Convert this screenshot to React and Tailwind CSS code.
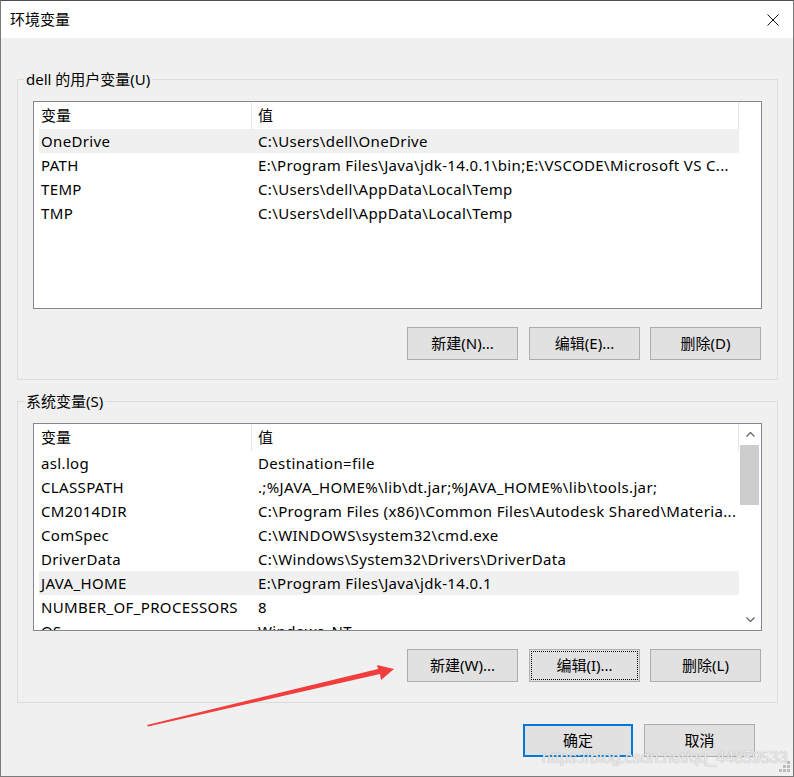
import React from 'react';

const USER_VARS = [
  ['OneDrive', 'C:\\Users\\dell\\OneDrive'],
  ['PATH', 'E:\\Program Files\\Java\\jdk-14.0.1\\bin;E:\\VSCODE\\Microsoft VS C...'],
  ['TEMP', 'C:\\Users\\dell\\AppData\\Local\\Temp'],
  ['TMP', 'C:\\Users\\dell\\AppData\\Local\\Temp'],
];

const SYSTEM_VARS = [
  ['asl.log', 'Destination=file'],
  ['CLASSPATH', '.;%JAVA_HOME%\\lib\\dt.jar;%JAVA_HOME%\\lib\\tools.jar;'],
  ['CM2014DIR', 'C:\\Program Files (x86)\\Common Files\\Autodesk Shared\\Materia...'],
  ['ComSpec', 'C:\\WINDOWS\\system32\\cmd.exe'],
  ['DriverData', 'C:\\Windows\\System32\\Drivers\\DriverData'],
  ['JAVA_HOME', 'E:\\Program Files\\Java\\jdk-14.0.1'],
  ['NUMBER_OF_PROCESSORS', '8'],
  ['OS', 'Windows_NT'],
];

const Chevron = ({ down }) => (
  <svg width="9" height="5" viewBox="0 0 9 5" fill="none">
    <path
      d={down ? 'M0.5 0.5 L4.5 4.5 L8.5 0.5' : 'M0.5 4.5 L4.5 0.5 L8.5 4.5'}
      stroke="#606060"
      strokeWidth="1.2"
    />
  </svg>
);

function VarList({ rows, selected, scroll }) {
  return (
    <div className="mt-[12px] h-[208px] border border-[#828790] bg-white flex overflow-hidden">
      <div className="w-[705px] shrink-0 pl-[5px] flex flex-col">
        {/* Header */}
        <div className="h-[27px] shrink-0 flex">
          <div className="w-[213px] pl-[2px] border-r border-[#e5e5e5] flex items-center">变量</div>
          <div className="w-[487px] pl-[6px] border-r border-[#e5e5e5] flex items-center">值</div>
        </div>
        {rows.map(([name, value]) => (
          <div
            key={name}
            className={`h-[24px] shrink-0 flex items-center tracking-[0.35px] ${name === selected ? 'bg-[#f0f0f0]' : ''}`}
          >
            <div className="w-[213px] pl-[2px] whitespace-nowrap overflow-hidden">{name}</div>
            <div className="w-[487px] pl-[6px] pr-[4px] whitespace-nowrap overflow-hidden">{value}</div>
          </div>
        ))}
      </div>
      {scroll && (
        <div className="flex-1 flex flex-col items-center">
          <div className="h-[21px] w-full flex items-center justify-center">
            <Chevron />
          </div>
          <div className="h-[60px] w-[19px] mr-[1px] bg-[#cdcdcd]" />
          <div className="flex-1" />
          <div className="h-[21px] w-full flex items-center justify-center">
            <Chevron down />
          </div>
        </div>
      )}
    </div>
  );
}

const Btn = ({ children, focused }) => (
  <button
    className={`w-[111px] h-[33px] bg-[#e1e1e1] border border-[#adadad] text-[15px] text-black ${
      focused ? 'outline-1 outline-dotted outline-black outline-offset-[-3px]' : ''
    }`}
  >
    {children}
  </button>
);

export default function App() {
  return (
    <div className="relative w-[794px] h-[777px] bg-[#f0f0f0] border border-[#7a7a7a] border-t-[#505050] flex flex-col font-['Noto_Sans','Noto_Sans_CJK_SC',sans-serif] text-[15px] text-black overflow-hidden">
      {/* Title bar */}
      <div className="h-[37px] shrink-0 bg-white flex items-center justify-between pl-[9px] pr-[14px]">
        <span className="text-[15px]">环境变量</span>
        <svg width="12" height="12" viewBox="0 0 12 12">
          <path d="M0.5 0.5 L11.5 11.5 M11.5 0.5 L0.5 11.5" stroke="#111" strokeWidth="1" />
        </svg>
      </div>

      {/* User variables */}
      <fieldset className="ml-[16px] mt-[31px] w-[761px] border border-[#dcdcdc] px-[15px] pb-[19px] min-w-0">
        <legend className="ml-[-9px] px-[2px] leading-[20px]">dell 的用户变量(U)</legend>
        <VarList rows={USER_VARS} selected="OneDrive" />
        <div className="mt-[18px] mr-[1px] flex justify-end">
          <Btn>新建(N)...</Btn>
          <div className="w-[11px]" />
          <Btn>编辑(E)...</Btn>
          <div className="w-[10px]" />
          <Btn>删除(D)</Btn>
        </div>
      </fieldset>

      {/* System variables */}
      <fieldset className="ml-[16px] mt-[11px] w-[761px] border border-[#dcdcdc] px-[15px] pb-[20px] min-w-0">
        <legend className="ml-[-9px] px-[2px] leading-[20px]">系统变量(S)</legend>
        <VarList rows={SYSTEM_VARS} selected="JAVA_HOME" scroll />
        <div className="mt-[18px] mr-[1px] flex justify-end">
          <Btn>新建(W)...</Btn>
          <div className="w-[11px]" />
          <Btn focused>编辑(I)...</Btn>
          <div className="w-[10px]" />
          <Btn>删除(L)</Btn>
        </div>
      </fieldset>

      {/* Dialog buttons */}
      <div className="mt-[21px] flex justify-end gap-[11px] pr-[38px]">
        <button className="w-[110px] h-[33px] bg-[#e1e1e1] border-2 border-[#0078d7] text-[15px]">确定</button>
        <button className="w-[111px] h-[33px] bg-[#e1e1e1] border border-[#adadad] text-[15px]">取消</button>
      </div>

      {/* Size grip */}
      <svg className="absolute right-[3px] bottom-[3px]" width="12" height="12" viewBox="0 0 12 12" fill="#bcbcbc">
        <rect x="9" y="0" width="3" height="3" />
        <rect x="5" y="4" width="3" height="3" />
        <rect x="9" y="4" width="3" height="3" />
        <rect x="1" y="8" width="3" height="3" />
        <rect x="5" y="8" width="3" height="3" />
        <rect x="9" y="8" width="3" height="3" />
      </svg>

      {/* Watermark */}
      <div className="absolute left-[541px] top-[747px] font-['Liberation_Sans',sans-serif] text-[16px] leading-[20px] text-white/80 [text-shadow:0_0_1px_#8a8a8a] pointer-events-none">
        https://blog.csdn.net/qq_44859533
      </div>

      {/* Annotation arrow */}
      <svg className="absolute left-0 top-0 pointer-events-none" width="794" height="777" viewBox="0 0 794 777">
        <polygon
          points="146,724 377,668 376,664 393,668 380,679 379,673 147,725.5"
          fill="#f23d3d"
        />
      </svg>
    </div>
  );
}
